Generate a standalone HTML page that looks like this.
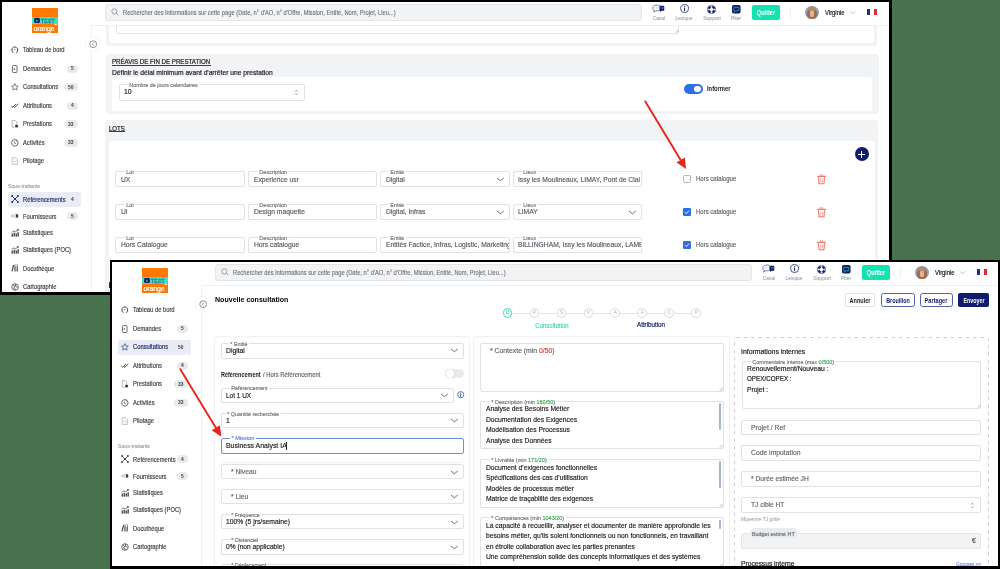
<!DOCTYPE html><html><head><meta charset="utf-8"><style>
html,body{margin:0;padding:0;}body{width:1000px;height:569px;overflow:hidden;position:relative;background:#48714e;font-family:"Liberation Sans",sans-serif;}
.b{position:absolute;}.t{position:absolute;white-space:nowrap;font-family:"Liberation Sans",sans-serif;}
.clip{position:absolute;overflow:hidden;background:#fff;will-change:transform;}.org{position:absolute;left:0;top:0;width:1200px;height:700px;}
</style></head><body>
<div class="b" style="left:0.00px;top:0.00px;width:892.00px;height:295.00px;background:#000"></div>
<div class="clip" style="left:2px;top:2px;width:887px;height:290px;"><div class="org" style="left:-2px;top:-2px;">
<div class="b" style="left:105.70px;top:0.00px;width:771.10px;height:46.40px;background:#f1f3f4;border-radius:3px"></div>
<div class="b" style="left:108.70px;top:0.00px;width:765.10px;height:43.30px;background:#fff;border-radius:2px"></div>
<div class="b" style="left:115.60px;top:10.00px;width:563.40px;height:23.90px;border:0.7px solid #e3e5e8;border-radius:2px;box-sizing:border-box;background:#fff"></div>
<svg class="b" style="left:674.60px;top:29.40px;" width="4" height="4" viewBox="0 0 4 4"><path d="M0.6 3.6 L3.6 0.6 M2.1 3.6 L3.6 2.1" stroke="#8a8f95" stroke-width="0.5"/></svg>
<div class="b" style="left:105.50px;top:54.30px;width:773.00px;height:59.30px;background:#f1f3f4;border-radius:3px"></div>
<div class="t" style="left:112.10px;top:58.04px;font-size:6.395px;line-height:8.31px;color:#202124;font-weight:400;-webkit-text-stroke:0.2px #202124;transform:scaleX(0.9615);transform-origin:0 50%;">PRÉAVIS DE FIN DE PRESTATION</div>
<div class="b" style="left:112.10px;top:65.00px;width:98.50px;height:0.60px;background:#3c4043"></div>
<div class="t" style="left:112.20px;top:67.53px;font-size:7.654px;line-height:9.95px;color:#202124;font-weight:400;-webkit-text-stroke:0.2px #202124;transform:scaleX(0.8772);transform-origin:0 50%;">Définir le délai minimum avant d'arrêter une prestation</div>
<div class="b" style="left:112.10px;top:77.40px;width:760.30px;height:33.20px;background:#fff;border-radius:2px"></div>
<div class="b" style="left:118.50px;top:84.00px;width:186.60px;height:16.90px;background:#fff;border:0.7px solid #e0e2e5;border-radius:2px;box-sizing:border-box;"></div>
<div class="t" style="left:129.70px;top:80.70px;font-size:6.156px;line-height:8.00px;color:#6f7378;font-weight:400;-webkit-text-stroke:0.16px #6f7378;transform:scaleX(0.8717);transform-origin:0 50%;background:#fff;padding:0 1.5px;margin-left:-1.5px;">Nombre de jours calendaires</div>
<div class="t" style="left:124.20px;top:87.47px;font-size:7.892px;line-height:10.26px;color:#202124;font-weight:400;-webkit-text-stroke:0.2px #202124;transform:scaleX(0.8772);transform-origin:0 50%;">10</div>
<svg class="b" style="left:293.50px;top:88.80px;" width="5" height="7" viewBox="0 0 5 7"><polyline points="1,2.6 2.4,1.2 3.8,2.6" fill="none" stroke="#5f6368" stroke-width="0.6"/><polyline points="1,4.4 2.4,5.8 3.8,4.4" fill="none" stroke="#5f6368" stroke-width="0.6"/></svg>
<div class="b" style="left:683.80px;top:84.00px;width:19.00px;height:10.20px;background:#2f6fe4;border-radius:5.2px"></div>
<div class="b" style="left:693.20px;top:84.70px;width:8.90px;height:8.80px;background:#fff;border-radius:50%;border:0.6px solid #2f6fe4;box-sizing:border-box"></div>
<div class="t" style="left:706.50px;top:85.31px;font-size:6.605px;line-height:8.59px;color:#202124;font-weight:700;transform:scaleX(0.8772);transform-origin:0 50%;">Informer</div>
<div class="b" style="left:105.30px;top:120.00px;width:773.20px;height:200.00px;background:#f1f3f4;border-radius:3px"></div>
<div class="t" style="left:108.80px;top:124.51px;font-size:6.291px;line-height:8.18px;color:#202124;font-weight:400;-webkit-text-stroke:0.2px #202124;transform:scaleX(0.9615);transform-origin:0 50%;">LOTS</div>
<div class="b" style="left:108.80px;top:131.30px;width:15.80px;height:0.60px;background:#3c4043"></div>
<div class="b" style="left:108.80px;top:140.50px;width:766.30px;height:179.50px;background:#fff;border-radius:2px"></div>
<div class="b" style="left:854.50px;top:147.30px;width:14.00px;height:14.00px;background:#0f1d6b;border-radius:50%"></div>
<div class="b" style="left:858.00px;top:153.60px;width:7.00px;height:1.40px;background:#fff"></div>
<div class="b" style="left:860.80px;top:150.80px;width:1.40px;height:7.00px;background:#fff"></div>
<div class="b" style="left:115.30px;top:171.30px;width:130.00px;height:16.10px;background:#fff;border:0.7px solid #e0e2e5;border-radius:2px;box-sizing:border-box;"></div>
<div class="t" style="left:126.40px;top:168.00px;font-size:6.156px;line-height:8.00px;color:#6f7378;font-weight:400;-webkit-text-stroke:0.16px #6f7378;transform:scaleX(0.8764);transform-origin:0 50%;background:#fff;padding:0 1.5px;margin-left:-1.5px;">Lot</div>
<div class="b" style="left:115.50px;top:171.50px;width:128.30px;height:15.30px;overflow:hidden">
<div class="t" style="left:5.80px;top:3.25px;font-size:7.695px;line-height:10.00px;color:#55595e;font-weight:400;-webkit-text-stroke:0.16px #55595e;transform:scaleX(0.8772);transform-origin:0 50%;">UX</div>
</div>
<div class="b" style="left:248.30px;top:171.30px;width:128.80px;height:16.10px;background:#fff;border:0.7px solid #e0e2e5;border-radius:2px;box-sizing:border-box;"></div>
<div class="t" style="left:259.00px;top:168.00px;font-size:6.156px;line-height:8.00px;color:#6f7378;font-weight:400;-webkit-text-stroke:0.16px #6f7378;transform:scaleX(0.9028);transform-origin:0 50%;background:#fff;padding:0 1.5px;margin-left:-1.5px;">Description</div>
<div class="b" style="left:248.50px;top:171.50px;width:127.10px;height:15.30px;overflow:hidden">
<div class="t" style="left:5.20px;top:3.25px;font-size:7.695px;line-height:10.00px;color:#55595e;font-weight:400;-webkit-text-stroke:0.16px #55595e;transform:scaleX(0.8772);transform-origin:0 50%;">Experience usr</div>
</div>
<div class="b" style="left:380.30px;top:171.30px;width:129.70px;height:16.10px;background:#fff;border:0.7px solid #e0e2e5;border-radius:2px;box-sizing:border-box;"></div>
<div class="t" style="left:390.40px;top:168.00px;font-size:6.156px;line-height:8.00px;color:#6f7378;font-weight:400;-webkit-text-stroke:0.16px #6f7378;transform:scaleX(0.8772);transform-origin:0 50%;background:#fff;padding:0 1.5px;margin-left:-1.5px;">Entité</div>
<div class="b" style="left:380.50px;top:171.50px;width:128.10px;height:15.30px;overflow:hidden">
<div class="t" style="left:5.10px;top:3.25px;font-size:7.695px;line-height:10.00px;color:#55595e;font-weight:400;-webkit-text-stroke:0.16px #55595e;transform:scaleX(0.8772);transform-origin:0 50%;">Digital</div>
</div>
<svg class="b" style="left:495.60px;top:175.05px;" width="8.8" height="8.8" viewBox="0 0 8.8 8.8"><polyline points="1,3.04 4.40,5.76 7.80,3.04" fill="none" stroke="#3c4043" stroke-width="0.75"/></svg>
<div class="b" style="left:513.20px;top:171.30px;width:128.80px;height:16.10px;background:#fff;border:0.7px solid #e0e2e5;border-radius:2px;box-sizing:border-box;"></div>
<div class="t" style="left:523.00px;top:168.00px;font-size:6.156px;line-height:8.00px;color:#6f7378;font-weight:400;-webkit-text-stroke:0.16px #6f7378;transform:scaleX(0.8772);transform-origin:0 50%;background:#fff;padding:0 1.5px;margin-left:-1.5px;">Lieux</div>
<div class="b" style="left:513.40px;top:171.50px;width:127.20px;height:15.30px;overflow:hidden">
<div class="t" style="left:4.50px;top:3.25px;font-size:7.695px;line-height:10.00px;color:#55595e;font-weight:400;-webkit-text-stroke:0.16px #55595e;transform:scaleX(0.8772);transform-origin:0 50%;">Issy les Moulineaux, LIMAY, Pont de Clai</div>
</div>
<div class="b" style="left:683.40px;top:175.15px;width:8.00px;height:8.00px;border:0.7px solid #b4b8bd;border-radius:1.4px;box-sizing:border-box;background:#fff"></div>
<div class="t" style="left:695.90px;top:175.11px;font-size:6.830px;line-height:8.88px;color:#5f6368;font-weight:400;-webkit-text-stroke:0.16px #5f6368;transform:scaleX(0.8772);transform-origin:0 50%;">Hors catalogue</div>
<svg class="b" style="left:816.80px;top:174.05px;" width="9" height="11" viewBox="0 0 9 11"><path d="M0.6 2.4 h7.8" stroke="#ee7b6e" stroke-width="1.3" stroke-linecap="round"/><path d="M3.2 1.6 v-0.8 h2.6 v0.8" fill="none" stroke="#ee7b6e" stroke-width="0.8"/><path d="M1.5 3.2 l0.5 6.6 h5 l0.5 -6.6" fill="none" stroke="#ee7b6e" stroke-width="1.1"/><path d="M3.6 4.6 v3.8 M5.4 4.6 v3.8" stroke="#ee7b6e" stroke-width="0.6"/></svg>
<div class="b" style="left:115.30px;top:203.80px;width:130.00px;height:16.00px;background:#fff;border:0.7px solid #e0e2e5;border-radius:2px;box-sizing:border-box;"></div>
<div class="t" style="left:126.40px;top:200.50px;font-size:6.156px;line-height:8.00px;color:#6f7378;font-weight:400;-webkit-text-stroke:0.16px #6f7378;transform:scaleX(0.8764);transform-origin:0 50%;background:#fff;padding:0 1.5px;margin-left:-1.5px;">Lot</div>
<div class="b" style="left:115.50px;top:204.00px;width:128.30px;height:15.20px;overflow:hidden">
<div class="t" style="left:5.80px;top:3.20px;font-size:7.695px;line-height:10.00px;color:#55595e;font-weight:400;-webkit-text-stroke:0.16px #55595e;transform:scaleX(0.8772);transform-origin:0 50%;">UI</div>
</div>
<div class="b" style="left:248.30px;top:203.80px;width:128.80px;height:16.00px;background:#fff;border:0.7px solid #e0e2e5;border-radius:2px;box-sizing:border-box;"></div>
<div class="t" style="left:259.00px;top:200.50px;font-size:6.156px;line-height:8.00px;color:#6f7378;font-weight:400;-webkit-text-stroke:0.16px #6f7378;transform:scaleX(0.9028);transform-origin:0 50%;background:#fff;padding:0 1.5px;margin-left:-1.5px;">Description</div>
<div class="b" style="left:248.50px;top:204.00px;width:127.10px;height:15.20px;overflow:hidden">
<div class="t" style="left:5.20px;top:3.20px;font-size:7.695px;line-height:10.00px;color:#55595e;font-weight:400;-webkit-text-stroke:0.16px #55595e;transform:scaleX(0.8772);transform-origin:0 50%;">Design maquette</div>
</div>
<div class="b" style="left:380.30px;top:203.80px;width:129.70px;height:16.00px;background:#fff;border:0.7px solid #e0e2e5;border-radius:2px;box-sizing:border-box;"></div>
<div class="t" style="left:390.40px;top:200.50px;font-size:6.156px;line-height:8.00px;color:#6f7378;font-weight:400;-webkit-text-stroke:0.16px #6f7378;transform:scaleX(0.8772);transform-origin:0 50%;background:#fff;padding:0 1.5px;margin-left:-1.5px;">Entité</div>
<div class="b" style="left:380.50px;top:204.00px;width:128.10px;height:15.20px;overflow:hidden">
<div class="t" style="left:5.10px;top:3.20px;font-size:7.695px;line-height:10.00px;color:#55595e;font-weight:400;-webkit-text-stroke:0.16px #55595e;transform:scaleX(0.8772);transform-origin:0 50%;">Digital, Infras</div>
</div>
<svg class="b" style="left:495.60px;top:207.50px;" width="8.8" height="8.8" viewBox="0 0 8.8 8.8"><polyline points="1,3.04 4.40,5.76 7.80,3.04" fill="none" stroke="#3c4043" stroke-width="0.75"/></svg>
<div class="b" style="left:513.20px;top:203.80px;width:128.80px;height:16.00px;background:#fff;border:0.7px solid #e0e2e5;border-radius:2px;box-sizing:border-box;"></div>
<div class="t" style="left:523.00px;top:200.50px;font-size:6.156px;line-height:8.00px;color:#6f7378;font-weight:400;-webkit-text-stroke:0.16px #6f7378;transform:scaleX(0.8772);transform-origin:0 50%;background:#fff;padding:0 1.5px;margin-left:-1.5px;">Lieux</div>
<div class="b" style="left:513.40px;top:204.00px;width:127.20px;height:15.20px;overflow:hidden">
<div class="t" style="left:4.50px;top:3.20px;font-size:7.695px;line-height:10.00px;color:#55595e;font-weight:400;-webkit-text-stroke:0.16px #55595e;transform:scaleX(0.8772);transform-origin:0 50%;">LIMAY</div>
</div>
<svg class="b" style="left:628.10px;top:207.50px;" width="8.8" height="8.8" viewBox="0 0 8.8 8.8"><polyline points="1,3.04 4.40,5.76 7.80,3.04" fill="none" stroke="#3c4043" stroke-width="0.75"/></svg>
<div class="b" style="left:683.40px;top:207.60px;width:8.00px;height:8.00px;background:#2f6fe4;border-radius:1.2px"></div>
<svg class="b" style="left:683.40px;top:207.60px;" width="8" height="8" viewBox="0 0 8 8"><polyline points="2,4.2 3.4,5.6 6,2.6" fill="none" stroke="#fff" stroke-width="0.9"/></svg>
<div class="t" style="left:695.90px;top:207.56px;font-size:6.830px;line-height:8.88px;color:#5f6368;font-weight:400;-webkit-text-stroke:0.16px #5f6368;transform:scaleX(0.8772);transform-origin:0 50%;">Hors catalogue</div>
<svg class="b" style="left:816.80px;top:206.50px;" width="9" height="11" viewBox="0 0 9 11"><path d="M0.6 2.4 h7.8" stroke="#ee7b6e" stroke-width="1.3" stroke-linecap="round"/><path d="M3.2 1.6 v-0.8 h2.6 v0.8" fill="none" stroke="#ee7b6e" stroke-width="0.8"/><path d="M1.5 3.2 l0.5 6.6 h5 l0.5 -6.6" fill="none" stroke="#ee7b6e" stroke-width="1.1"/><path d="M3.6 4.6 v3.8 M5.4 4.6 v3.8" stroke="#ee7b6e" stroke-width="0.6"/></svg>
<div class="b" style="left:115.30px;top:236.80px;width:130.00px;height:16.00px;background:#fff;border:0.7px solid #e0e2e5;border-radius:2px;box-sizing:border-box;"></div>
<div class="t" style="left:126.40px;top:233.50px;font-size:6.156px;line-height:8.00px;color:#6f7378;font-weight:400;-webkit-text-stroke:0.16px #6f7378;transform:scaleX(0.8764);transform-origin:0 50%;background:#fff;padding:0 1.5px;margin-left:-1.5px;">Lot</div>
<div class="b" style="left:115.50px;top:237.00px;width:128.30px;height:15.20px;overflow:hidden">
<div class="t" style="left:5.80px;top:3.20px;font-size:7.695px;line-height:10.00px;color:#55595e;font-weight:400;-webkit-text-stroke:0.16px #55595e;transform:scaleX(0.8772);transform-origin:0 50%;">Hors Catalogue</div>
</div>
<div class="b" style="left:248.30px;top:236.80px;width:128.80px;height:16.00px;background:#fff;border:0.7px solid #e0e2e5;border-radius:2px;box-sizing:border-box;"></div>
<div class="t" style="left:259.00px;top:233.50px;font-size:6.156px;line-height:8.00px;color:#6f7378;font-weight:400;-webkit-text-stroke:0.16px #6f7378;transform:scaleX(0.9028);transform-origin:0 50%;background:#fff;padding:0 1.5px;margin-left:-1.5px;">Description</div>
<div class="b" style="left:248.50px;top:237.00px;width:127.10px;height:15.20px;overflow:hidden">
<div class="t" style="left:5.20px;top:3.20px;font-size:7.695px;line-height:10.00px;color:#55595e;font-weight:400;-webkit-text-stroke:0.16px #55595e;transform:scaleX(0.8772);transform-origin:0 50%;">Hors catalogue</div>
</div>
<div class="b" style="left:380.30px;top:236.80px;width:129.70px;height:16.00px;background:#fff;border:0.7px solid #e0e2e5;border-radius:2px;box-sizing:border-box;"></div>
<div class="t" style="left:390.40px;top:233.50px;font-size:6.156px;line-height:8.00px;color:#6f7378;font-weight:400;-webkit-text-stroke:0.16px #6f7378;transform:scaleX(0.8772);transform-origin:0 50%;background:#fff;padding:0 1.5px;margin-left:-1.5px;">Entité</div>
<div class="b" style="left:380.50px;top:237.00px;width:128.10px;height:15.20px;overflow:hidden">
<div class="t" style="left:5.10px;top:3.20px;font-size:7.695px;line-height:10.00px;color:#55595e;font-weight:400;-webkit-text-stroke:0.16px #55595e;transform:scaleX(0.8772);transform-origin:0 50%;">Entités Factice, Infras, Logistic, Marketing</div>
</div>
<div class="b" style="left:513.20px;top:236.80px;width:128.80px;height:16.00px;background:#fff;border:0.7px solid #e0e2e5;border-radius:2px;box-sizing:border-box;"></div>
<div class="t" style="left:523.00px;top:233.50px;font-size:6.156px;line-height:8.00px;color:#6f7378;font-weight:400;-webkit-text-stroke:0.16px #6f7378;transform:scaleX(0.8772);transform-origin:0 50%;background:#fff;padding:0 1.5px;margin-left:-1.5px;">Lieux</div>
<div class="b" style="left:513.40px;top:237.00px;width:127.20px;height:15.20px;overflow:hidden">
<div class="t" style="left:4.50px;top:3.20px;font-size:7.695px;line-height:10.00px;color:#55595e;font-weight:400;-webkit-text-stroke:0.16px #55595e;transform:scaleX(0.8772);transform-origin:0 50%;">BILLINGHAM, Issy les Moulineaux, LAMBERSART</div>
</div>
<div class="b" style="left:683.40px;top:240.60px;width:8.00px;height:8.00px;background:#2f6fe4;border-radius:1.2px"></div>
<svg class="b" style="left:683.40px;top:240.60px;" width="8" height="8" viewBox="0 0 8 8"><polyline points="2,4.2 3.4,5.6 6,2.6" fill="none" stroke="#fff" stroke-width="0.9"/></svg>
<div class="t" style="left:695.90px;top:240.56px;font-size:6.830px;line-height:8.88px;color:#5f6368;font-weight:400;-webkit-text-stroke:0.16px #5f6368;transform:scaleX(0.8772);transform-origin:0 50%;">Hors catalogue</div>
<svg class="b" style="left:816.80px;top:239.50px;" width="9" height="11" viewBox="0 0 9 11"><path d="M0.6 2.4 h7.8" stroke="#ee7b6e" stroke-width="1.3" stroke-linecap="round"/><path d="M3.2 1.6 v-0.8 h2.6 v0.8" fill="none" stroke="#ee7b6e" stroke-width="0.8"/><path d="M1.5 3.2 l0.5 6.6 h5 l0.5 -6.6" fill="none" stroke="#ee7b6e" stroke-width="1.1"/><path d="M3.6 4.6 v3.8 M5.4 4.6 v3.8" stroke="#ee7b6e" stroke-width="0.6"/></svg>
<div class="b" style="left:108.50px;top:282.00px;width:2.00px;height:6.00px;background:#333"></div>
<div class="b" style="left:0.00px;top:0.00px;width:91.40px;height:700.00px;background:#fff"></div>
<div class="b" style="left:91.40px;top:0.00px;width:908.60px;height:25.30px;background:#fff"></div>
<div class="b" style="left:91.20px;top:25.30px;width:0.60px;height:674.70px;background:#eff1f3"></div>
<div class="b" style="left:91.40px;top:25.00px;width:908.60px;height:0.60px;background:#eef0f2"></div>
<div class="b" style="left:32.00px;top:8.00px;width:25.50px;height:25.00px;background:#ff7900"></div>
<div class="b" style="left:32.00px;top:16.50px;width:25.50px;height:7.80px;background:#3fe2c2"></div>
<div class="b" style="left:34.30px;top:17.50px;width:6.00px;height:5.80px;background:#0f1d6b;border-radius:1.4px"></div>
<svg class="b" style="left:34.30px;top:17.50px;" width="6" height="6" viewBox="0 0 6 6"><path d="M2.2 1.6 L4.2 2.9 L2.2 4.2 Z" fill="#3fb6e2"/></svg>
<div class="t" style="left:41.2px;top:17.6px;font-size:5.2px;line-height:6.5px;font-weight:700;color:#49d6c4;-webkit-text-stroke:0.3px #1b4f86;letter-spacing:0.35px;transform:scaleX(0.95);transform-origin:0 0">TEST</div>
<div class="t" style="left:33.40px;top:24.05px;font-size:7.000px;line-height:9.10px;color:#fff;font-weight:400;-webkit-text-stroke:0.2px #fff;letter-spacing:-0.1px;">orange</div>
<div class="t" style="left:54.40px;top:23.98px;font-size:2.500px;line-height:3.25px;color:#fff;font-weight:400;-webkit-text-stroke:0.16px #fff;">™</div>
<div class="b" style="left:105.20px;top:4.20px;width:537.10px;height:16.80px;background:#f1f3f4;border:0.6px solid #e4e7ea;border-radius:3px;box-sizing:border-box"></div>
<svg class="b" style="left:110.50px;top:8.30px;" width="8" height="8" viewBox="0 0 8 8"><circle cx="3.4" cy="3.4" r="2.6" fill="none" stroke="#7a7f85" stroke-width="0.7"/><line x1="5.3" y1="5.3" x2="7.3" y2="7.3" stroke="#7a7f85" stroke-width="0.7"/></svg>
<div class="t" style="left:122.80px;top:8.73px;font-size:6.573px;line-height:8.54px;color:#6b7075;font-weight:400;-webkit-text-stroke:0.16px #6b7075;transform:scaleX(0.8772);transform-origin:0 50%;-webkit-text-stroke:0.1px #6b7075;">Rechercher des informations sur cette page (Date, n° d'AO, n° d'Offre, Mission, Entité, Nom, Projet, Lieu...)</div>
<svg class="b" style="left:651.50px;top:3.50px;" width="13" height="9" viewBox="0 0 13 9"><path d="M5 1 C7.6 1 9 2.2 9 3.9 C9 5.6 7.6 6.8 5 6.8 L3.6 6.8 L1.6 8.2 L2.2 6.4 C1.2 5.9 0.8 5 0.8 3.9 C0.8 2.2 2.4 1 5 1z" fill="#fff" stroke="#0f1d6b" stroke-width="0.55"/><line x1="2.6" y1="3.9" x2="7.2" y2="3.9" stroke="#9aa0a6" stroke-width="0.5"/><path d="M8.4 1.8 h3 a0.9 0.9 0 0 1 0.9 0.9 v3.2 a0.9 0.9 0 0 1 -0.9 0.9 h-1.6 l-1.6 1.2 v-1.2 a0.9 0.9 0 0 1 -0.7 -0.9 v-3.2 a0.9 0.9 0 0 1 0.9 -0.9z" fill="#0f1d6b"/><line x1="9.2" y1="4.0" x2="11.6" y2="4.0" stroke="#fff" stroke-width="0.5"/></svg>
<div class="t" style="left:658.80px;top:14.82px;font-size:5.500px;line-height:7.15px;color:#a8adb2;font-weight:400;-webkit-text-stroke:0.16px #a8adb2;transform:translateX(-50%) scaleX(0.8559);transform-origin:50% 50%;">Canal</div>
<svg class="b" style="left:679.60px;top:4.40px;" width="10" height="10" viewBox="0 0 10 10"><circle cx="4.6" cy="4.6" r="4.0" fill="none" stroke="#0f1d6b" stroke-width="0.75"/><circle cx="4.6" cy="2.6" r="0.6" fill="#0f1d6b"/><rect x="4.1" y="3.8" width="1" height="3.3" fill="#0f1d6b"/></svg>
<div class="t" style="left:684.20px;top:14.82px;font-size:5.500px;line-height:7.15px;color:#a8adb2;font-weight:400;-webkit-text-stroke:0.16px #a8adb2;transform:translateX(-50%) scaleX(0.8772);transform-origin:50% 50%;">Lexique</div>
<svg class="b" style="left:707.40px;top:4.60px;" width="9" height="9" viewBox="0 0 9 9"><circle cx="4.5" cy="4.5" r="4.1" fill="#d6dbe8" stroke="#0f1d6b" stroke-width="0.45"/><circle cx="4.5" cy="4.5" r="1.6" fill="#fff"/><path d="M7.37 5.38 A3.0 3.0 0 0 1 5.38 7.37" fill="none" stroke="#0f1d6b" stroke-width="2.1"/><path d="M3.62 7.37 A3.0 3.0 0 0 1 1.63 5.38" fill="none" stroke="#0f1d6b" stroke-width="2.1"/><path d="M1.63 3.62 A3.0 3.0 0 0 1 3.62 1.63" fill="none" stroke="#0f1d6b" stroke-width="2.1"/><path d="M5.38 1.63 A3.0 3.0 0 0 1 7.37 3.62" fill="none" stroke="#0f1d6b" stroke-width="2.1"/></svg>
<div class="t" style="left:711.80px;top:14.82px;font-size:5.500px;line-height:7.15px;color:#a8adb2;font-weight:400;-webkit-text-stroke:0.16px #a8adb2;transform:translateX(-50%) scaleX(0.9136);transform-origin:50% 50%;">Support</div>
<svg class="b" style="left:731.70px;top:4.80px;" width="9" height="9" viewBox="0 0 9 9"><rect x="0" y="0" width="8.6" height="8.6" rx="1.8" fill="#0f1d6b"/><path d="M2.4 2.3 h3.8 a0.6 0.6 0 0 1 0.6 0.6 v2.3 a0.6 0.6 0 0 1 -0.6 0.6 h-2.4 l-1.6 1.3 v-1.3 a0.6 0.6 0 0 1 -0.4 -0.6 v-2.3 a0.6 0.6 0 0 1 0.6 -0.6z" fill="none" stroke="#3fe2c2" stroke-width="0.6"/></svg>
<div class="t" style="left:736.10px;top:14.82px;font-size:5.500px;line-height:7.15px;color:#a8adb2;font-weight:400;-webkit-text-stroke:0.16px #a8adb2;transform:translateX(-50%) scaleX(0.9019);transform-origin:50% 50%;">Piter</div>
<div class="b" style="left:751.50px;top:5.10px;width:28.30px;height:14.80px;background:#14e2b0;border-radius:2px"></div>
<div class="t" style="left:765.50px;top:9.04px;font-size:6.399px;line-height:8.32px;color:#fff;font-weight:700;transform:translateX(-50%) scaleX(0.8772);transform-origin:50% 50%;">Quitter</div>
<div class="b" style="left:790.30px;top:7.00px;width:0.60px;height:11.00px;background:#eef0f2"></div>
<div class="b" style="left:805.3px;top:5.5px;width:13.4px;height:13.4px;border-radius:50%;overflow:hidden;background:#8a9cc0;"><div style="position:absolute;left:1.6px;top:2.2px;width:10.2px;height:13px;border-radius:48%;background:#9c6f4c"></div><div style="position:absolute;left:4.3px;top:4.6px;width:4.8px;height:6.8px;border-radius:50%;background:#e6b39a"></div><div style="position:absolute;left:3px;top:1.8px;width:7.5px;height:3.6px;border-radius:50%;background:#b58a62"></div></div>
<div class="t" style="left:825.40px;top:8.62px;font-size:6.736px;line-height:8.76px;color:#202124;font-weight:400;-webkit-text-stroke:0.2px #202124;transform:scaleX(0.8772);transform-origin:0 50%;">Virginie</div>
<svg class="b" style="left:848.90px;top:8.80px;" width="7.2" height="7.2" viewBox="0 0 7.2 7.2"><polyline points="1,2.56 3.60,4.64 6.20,2.56" fill="none" stroke="#9aa0a6" stroke-width="0.6"/></svg>
<div class="b" style="left:867.00px;top:9.40px;width:3.40px;height:5.80px;background:#1e2f86"></div>
<div class="b" style="left:873.80px;top:9.40px;width:3.40px;height:5.80px;background:#e8282e"></div>
<div class="b" style="left:85.8px;top:36.8px;width:14.4px;height:14.4px;border-radius:50%;background:#fff;box-shadow:0 0 2px rgba(0,0,0,0.12)"></div>
<svg class="b" style="left:88.80px;top:39.80px;" width="9" height="9" viewBox="0 0 9 9"><circle cx="4.2" cy="4.2" r="3.4" fill="none" stroke="#5f6368" stroke-width="0.7"/><polyline points="4.9,2.6 3.3,4.2 4.9,5.8" fill="none" stroke="#5f6368" stroke-width="0.7"/></svg>
<div class="t" style="left:7.90px;top:183.15px;font-size:5.928px;line-height:7.71px;color:#9aa0a6;font-weight:400;-webkit-text-stroke:0.16px #9aa0a6;transform:scaleX(0.8772);transform-origin:0 50%;">Sous-traitants</div>
<div class="t" style="left:22.80px;top:46.40px;font-size:6.612px;line-height:8.60px;color:#383b40;font-weight:400;-webkit-text-stroke:0.16px #383b40;transform:scaleX(0.8772);transform-origin:0 50%;">Tableau de bord</div>
<svg class="b" style="left:10.60px;top:46.20px;" width="8" height="8" viewBox="0 0 8 8"><path stroke-linecap="round" d="M2.02 6.54 A3.1 3.1 0 0 1 1.73 1.70 M2.84 1.05 A3.1 3.1 0 0 1 4.76 1.05 M5.87 1.70 A3.1 3.1 0 0 1 5.58 6.54" fill="none" stroke="#383b40" stroke-width="1.0"/><circle cx="3.8" cy="3.5" r="0.65" fill="#e8503a"/></svg>
<div class="t" style="left:22.80px;top:64.80px;font-size:6.612px;line-height:8.60px;color:#383b40;font-weight:400;-webkit-text-stroke:0.16px #383b40;transform:scaleX(0.8772);transform-origin:0 50%;">Demandes</div>
<svg class="b" style="left:10.60px;top:64.60px;" width="8" height="8" viewBox="0 0 8 8"><rect x="1.4" y="0.5" width="4.6" height="7" rx="1" fill="none" stroke="#383b40" stroke-width="0.75"/><circle cx="3.3" cy="3.9" r="0.75" fill="#383b40"/></svg>
<div class="b" style="left:67.00px;top:64.60px;width:10.60px;height:8.00px;background:#e8eaed;border-radius:4px"></div>
<div class="t" style="left:72.30px;top:66.11px;font-size:4.900px;line-height:6.37px;color:#3c4043;font-weight:700;transform:translateX(-50%) scaleX(1.0000);transform-origin:50% 50%;">5</div>
<div class="t" style="left:22.80px;top:83.30px;font-size:6.612px;line-height:8.60px;color:#383b40;font-weight:400;-webkit-text-stroke:0.16px #383b40;transform:scaleX(0.8772);transform-origin:0 50%;">Consultations</div>
<svg class="b" style="left:10.60px;top:83.10px;" width="8" height="8" viewBox="0 0 8 8"><path d="M3.9 0.6 L4.9 2.9 L7.3 3.1 L5.5 4.7 L6.0 7.1 L3.9 5.8 L1.8 7.1 L2.3 4.7 L0.5 3.1 L2.9 2.9 Z" fill="none" stroke="#383b40" stroke-width="0.6" stroke-linejoin="round"/></svg>
<div class="b" style="left:64.00px;top:83.10px;width:13.60px;height:8.00px;background:#e8eaed;border-radius:4px"></div>
<div class="t" style="left:70.80px;top:84.61px;font-size:4.900px;line-height:6.37px;color:#3c4043;font-weight:700;transform:translateX(-50%) scaleX(1.0000);transform-origin:50% 50%;">50</div>
<div class="t" style="left:22.80px;top:101.70px;font-size:6.612px;line-height:8.60px;color:#383b40;font-weight:400;-webkit-text-stroke:0.16px #383b40;transform:scaleX(0.8772);transform-origin:0 50%;">Attributions</div>
<svg class="b" style="left:10.60px;top:101.50px;" width="8" height="8" viewBox="0 0 8 8"><path d="M0.6 4.2 L1.9 5.3 L4.6 2.3 M3.0 4.8 L3.9 5.4 L7.0 2.0" fill="none" stroke="#383b40" stroke-width="0.9" stroke-linecap="round"/></svg>
<div class="b" style="left:67.00px;top:101.50px;width:10.60px;height:8.00px;background:#e8eaed;border-radius:4px"></div>
<div class="t" style="left:72.30px;top:103.02px;font-size:4.900px;line-height:6.37px;color:#3c4043;font-weight:700;transform:translateX(-50%) scaleX(1.0000);transform-origin:50% 50%;">4</div>
<div class="t" style="left:22.80px;top:120.20px;font-size:6.612px;line-height:8.60px;color:#383b40;font-weight:400;-webkit-text-stroke:0.16px #383b40;transform:scaleX(0.8772);transform-origin:0 50%;">Prestations</div>
<svg class="b" style="left:10.60px;top:120.00px;" width="8" height="8" viewBox="0 0 8 8"><path d="M1.2 0.6 h3.2 l1.3 1.3 v2.0 M1.2 0.6 v6.6 h2.6" fill="none" stroke="#8a8f95" stroke-width="0.6"/><circle cx="5.6" cy="6.0" r="1.6" fill="#383b40"/></svg>
<div class="b" style="left:64.00px;top:120.00px;width:13.60px;height:8.00px;background:#e8eaed;border-radius:4px"></div>
<div class="t" style="left:70.80px;top:121.52px;font-size:4.900px;line-height:6.37px;color:#3c4043;font-weight:700;transform:translateX(-50%) scaleX(1.0000);transform-origin:50% 50%;">33</div>
<div class="t" style="left:22.80px;top:138.70px;font-size:6.612px;line-height:8.60px;color:#383b40;font-weight:400;-webkit-text-stroke:0.16px #383b40;transform:scaleX(0.8772);transform-origin:0 50%;">Activités</div>
<svg class="b" style="left:10.60px;top:138.50px;" width="8" height="8" viewBox="0 0 8 8"><path d="M6.4 2.0 A3.2 3.2 0 1 1 5.2 1.0" fill="none" stroke="#383b40" stroke-width="0.8"/><path d="M5.0 0.2 L6.6 1.2 L5.4 2.4z" fill="#383b40"/><polyline points="3.4,2.2 3.4,4.2 5.0,4.6" fill="none" stroke="#383b40" stroke-width="0.6"/></svg>
<div class="b" style="left:64.00px;top:138.50px;width:13.60px;height:8.00px;background:#e8eaed;border-radius:4px"></div>
<div class="t" style="left:70.80px;top:140.01px;font-size:4.900px;line-height:6.37px;color:#3c4043;font-weight:700;transform:translateX(-50%) scaleX(1.0000);transform-origin:50% 50%;">33</div>
<div class="t" style="left:22.80px;top:157.20px;font-size:6.612px;line-height:8.60px;color:#383b40;font-weight:400;-webkit-text-stroke:0.16px #383b40;transform:scaleX(0.8772);transform-origin:0 50%;">Pilotage</div>
<svg class="b" style="left:10.60px;top:157.00px;" width="8" height="8" viewBox="0 0 8 8"><path d="M1.2 0.6 h3.4 l1.9 1.9 v5.0 h-5.3 z" fill="#f4f5f6" stroke="#a9adb2" stroke-width="0.6"/><polyline points="2.4,5.4 3.4,4.2 4.2,5.0 5.2,3.8" fill="none" stroke="#a9adb2" stroke-width="0.5"/></svg>
<div class="b" style="left:7.90px;top:191.80px;width:73.30px;height:15.00px;background:#e9ecf4;border-radius:2.5px"></div>
<div class="t" style="left:22.80px;top:195.50px;font-size:6.612px;line-height:8.60px;color:#1a2a6c;font-weight:400;-webkit-text-stroke:0.16px #1a2a6c;transform:scaleX(0.8772);transform-origin:0 50%;">Référencements</div>
<svg class="b" style="left:10.60px;top:195.30px;" width="8" height="8" viewBox="0 0 8 8"><path d="M1.3 1.3 L6.7 6.7 M6.7 1.3 L1.3 6.7" stroke="#1a2a6c" stroke-width="0.85"/><circle cx="1.1" cy="1.1" r="1.0" fill="#1a2a6c"/><circle cx="6.9" cy="1.1" r="1.0" fill="#1a2a6c"/><circle cx="1.1" cy="6.9" r="1.0" fill="#1a2a6c"/><circle cx="6.9" cy="6.9" r="1.0" fill="#1a2a6c"/><circle cx="4" cy="4" r="1.1" fill="#1a2a6c"/></svg>
<div class="b" style="left:67.00px;top:195.30px;width:10.60px;height:8.00px;background:transparent;border-radius:4px"></div>
<div class="t" style="left:72.30px;top:196.81px;font-size:4.900px;line-height:6.37px;color:#3c4043;font-weight:700;transform:translateX(-50%) scaleX(1.0000);transform-origin:50% 50%;">4</div>
<div class="t" style="left:22.80px;top:212.60px;font-size:6.612px;line-height:8.60px;color:#383b40;font-weight:400;-webkit-text-stroke:0.16px #383b40;transform:scaleX(0.8772);transform-origin:0 50%;">Fournisseurs</div>
<svg class="b" style="left:10.60px;top:212.40px;" width="8" height="8" viewBox="0 0 8 8"><path d="M0.6 3.0 h2.2 l2.6 -1.4 v4.6 l-2.6 -1.4 h-2.2z" fill="#e4e6e9" stroke="#9aa0a6" stroke-width="0.45"/><rect x="5.0" y="2.2" width="2.2" height="3.4" rx="0.6" fill="#383b40"/></svg>
<div class="b" style="left:67.00px;top:212.40px;width:10.60px;height:8.00px;background:#e8eaed;border-radius:4px"></div>
<div class="t" style="left:72.30px;top:213.91px;font-size:4.900px;line-height:6.37px;color:#3c4043;font-weight:700;transform:translateX(-50%) scaleX(1.0000);transform-origin:50% 50%;">5</div>
<div class="t" style="left:22.80px;top:229.40px;font-size:6.612px;line-height:8.60px;color:#383b40;font-weight:400;-webkit-text-stroke:0.16px #383b40;transform:scaleX(0.8772);transform-origin:0 50%;">Statistiques</div>
<svg class="b" style="left:10.60px;top:229.20px;" width="8" height="8" viewBox="0 0 8 8"><rect x="0.6" y="4.6" width="1.3" height="3" fill="#383b40"/><rect x="2.6" y="3.8" width="1.3" height="3.8" fill="#383b40"/><rect x="4.6" y="4.4" width="1.3" height="3.2" fill="#383b40"/><rect x="6.5" y="3.2" width="1.3" height="4.4" fill="#383b40"/><polyline points="0.6,3.4 2.8,2.0 4.6,2.8 7.0,0.9" fill="none" stroke="#383b40" stroke-width="0.7"/><circle cx="7.0" cy="0.9" r="0.8" fill="#383b40"/></svg>
<div class="t" style="left:22.80px;top:246.20px;font-size:6.612px;line-height:8.60px;color:#383b40;font-weight:400;-webkit-text-stroke:0.16px #383b40;transform:scaleX(0.8772);transform-origin:0 50%;">Statistiques (POC)</div>
<svg class="b" style="left:10.60px;top:246.00px;" width="8" height="8" viewBox="0 0 8 8"><rect x="0.6" y="4.6" width="1.3" height="3" fill="#383b40"/><rect x="2.6" y="3.8" width="1.3" height="3.8" fill="#383b40"/><rect x="4.6" y="4.4" width="1.3" height="3.2" fill="#383b40"/><rect x="6.5" y="3.2" width="1.3" height="4.4" fill="#383b40"/><polyline points="0.6,3.4 2.8,2.0 4.6,2.8 7.0,0.9" fill="none" stroke="#383b40" stroke-width="0.7"/><circle cx="7.0" cy="0.9" r="0.8" fill="#383b40"/></svg>
<div class="t" style="left:22.80px;top:264.50px;font-size:6.612px;line-height:8.60px;color:#383b40;font-weight:400;-webkit-text-stroke:0.16px #383b40;transform:scaleX(0.8772);transform-origin:0 50%;">Docuthèque</div>
<svg class="b" style="left:10.60px;top:264.30px;" width="8" height="8" viewBox="0 0 8 8"><path d="M1.0 7.4 L2.6 1.0 M4.0 7.4 V2.2 M6.2 7.4 V2.2" stroke="#383b40" stroke-width="1.1"/><rect x="3.4" y="0.6" width="1.2" height="0.9" fill="#383b40"/><rect x="5.6" y="0.6" width="1.2" height="0.9" fill="#383b40"/></svg>
<div class="t" style="left:22.80px;top:283.00px;font-size:6.612px;line-height:8.60px;color:#383b40;font-weight:400;-webkit-text-stroke:0.16px #383b40;transform:scaleX(0.8772);transform-origin:0 50%;">Cartographie</div>
<svg class="b" style="left:10.60px;top:282.80px;" width="8" height="8" viewBox="0 0 8 8"><circle cx="4" cy="4" r="3.3" fill="none" stroke="#383b40" stroke-width="0.75"/><path d="M2.0 2.0 L3.6 3.2 L2.6 5.6 M4.8 1.0 L4.4 3.2 L6.6 4.4 M3.4 5.0 L4.6 7.0" fill="none" stroke="#383b40" stroke-width="0.8"/></svg>
</div></div>
<div class="b" style="left:110.00px;top:260.00px;width:890.00px;height:309.00px;background:#000"></div>
<div class="clip" style="left:112px;top:262px;width:886px;height:304px;"><div class="org" style="left:-2px;top:-2px;">
<div class="t" style="left:104.60px;top:34.96px;font-size:8.064px;line-height:10.48px;color:#000;font-weight:700;transform:scaleX(0.8772);transform-origin:0 50%;">Nouvelle consultation</div>
<div class="b" style="left:397.60px;top:52.50px;width:188.60px;height:0.60px;background:#e3e5e8"></div>
<div class="b" style="left:392.70px;top:47.90px;width:9.80px;height:9.80px;background:#fff;border:0.9px solid #3fd9b4;border-radius:50%;box-sizing:border-box"></div>
<div class="t" style="left:397.60px;top:50.41px;font-size:4.600px;line-height:5.98px;color:#3fd9b4;font-weight:400;-webkit-text-stroke:0.16px #3fd9b4;transform:translateX(-50%) scaleX(1.0000);transform-origin:50% 50%;">D</div>
<div class="b" style="left:419.64px;top:47.90px;width:9.80px;height:9.80px;background:#fff;border:0.7px solid #dadce0;border-radius:50%;box-sizing:border-box"></div>
<div class="t" style="left:424.54px;top:50.41px;font-size:4.600px;line-height:5.98px;color:#c4c7cc;font-weight:400;-webkit-text-stroke:0.16px #c4c7cc;transform:translateX(-50%) scaleX(1.0000);transform-origin:50% 50%;">P</div>
<div class="b" style="left:446.58px;top:47.90px;width:9.80px;height:9.80px;background:#fff;border:0.7px solid #dadce0;border-radius:50%;box-sizing:border-box"></div>
<div class="t" style="left:451.48px;top:50.41px;font-size:4.600px;line-height:5.98px;color:#c4c7cc;font-weight:400;-webkit-text-stroke:0.16px #c4c7cc;transform:translateX(-50%) scaleX(1.0000);transform-origin:50% 50%;">S</div>
<div class="b" style="left:473.52px;top:47.90px;width:9.80px;height:9.80px;background:#fff;border:0.7px solid #dadce0;border-radius:50%;box-sizing:border-box"></div>
<div class="t" style="left:478.42px;top:50.41px;font-size:4.600px;line-height:5.98px;color:#c4c7cc;font-weight:400;-webkit-text-stroke:0.16px #c4c7cc;transform:translateX(-50%) scaleX(1.0000);transform-origin:50% 50%;">V</div>
<div class="b" style="left:500.46px;top:47.90px;width:9.80px;height:9.80px;background:#fff;border:0.7px solid #dadce0;border-radius:50%;box-sizing:border-box"></div>
<div class="t" style="left:505.36px;top:50.41px;font-size:4.600px;line-height:5.98px;color:#c4c7cc;font-weight:400;-webkit-text-stroke:0.16px #c4c7cc;transform:translateX(-50%) scaleX(1.0000);transform-origin:50% 50%;">A</div>
<div class="b" style="left:527.40px;top:47.90px;width:9.80px;height:9.80px;background:#fff;border:0.7px solid #dadce0;border-radius:50%;box-sizing:border-box"></div>
<div class="t" style="left:532.30px;top:50.41px;font-size:4.600px;line-height:5.98px;color:#c4c7cc;font-weight:400;-webkit-text-stroke:0.16px #c4c7cc;transform:translateX(-50%) scaleX(1.0000);transform-origin:50% 50%;">F</div>
<div class="b" style="left:554.34px;top:47.90px;width:9.80px;height:9.80px;background:#fff;border:0.7px solid #dadce0;border-radius:50%;box-sizing:border-box"></div>
<div class="t" style="left:559.24px;top:50.41px;font-size:4.600px;line-height:5.98px;color:#c4c7cc;font-weight:400;-webkit-text-stroke:0.16px #c4c7cc;transform:translateX(-50%) scaleX(1.0000);transform-origin:50% 50%;">C</div>
<div class="b" style="left:581.28px;top:47.90px;width:9.80px;height:9.80px;background:#fff;border:0.7px solid #dadce0;border-radius:50%;box-sizing:border-box"></div>
<div class="t" style="left:586.18px;top:50.41px;font-size:4.600px;line-height:5.98px;color:#c4c7cc;font-weight:400;-webkit-text-stroke:0.16px #c4c7cc;transform:translateX(-50%) scaleX(1.0000);transform-origin:50% 50%;">P</div>
<div class="t" style="left:441.70px;top:61.55px;font-size:6.849px;line-height:8.90px;color:#3fd9b4;font-weight:400;-webkit-text-stroke:0.16px #3fd9b4;transform:translateX(-50%) scaleX(0.8772);transform-origin:50% 50%;">Consultation</div>
<div class="t" style="left:541.40px;top:61.39px;font-size:7.089px;line-height:9.22px;color:#0f1d6b;font-weight:400;-webkit-text-stroke:0.2px #0f1d6b;transform:translateX(-50%) scaleX(0.8772);transform-origin:50% 50%;">Attribution</div>
<div class="b" style="left:734.80px;top:32.70px;width:30.70px;height:14.70px;border:0.6px solid #e3e5e8;border-radius:2px;box-sizing:border-box;background:#fff"></div>
<div class="t" style="left:750.20px;top:36.84px;font-size:6.400px;line-height:8.32px;color:#202124;font-weight:700;transform:translateX(-50%) scaleX(0.8603);transform-origin:50% 50%;">Annuler</div>
<div class="b" style="left:771.10px;top:32.70px;width:33.60px;height:14.70px;border:0.7px solid #5563a0;border-radius:2.5px;box-sizing:border-box;background:#fff"></div>
<div class="t" style="left:787.90px;top:36.84px;font-size:6.400px;line-height:8.32px;color:#0f1d6b;font-weight:700;transform:translateX(-50%) scaleX(0.8439);transform-origin:50% 50%;">Brouillon</div>
<div class="b" style="left:809.50px;top:32.70px;width:33.30px;height:14.70px;border:0.7px solid #5563a0;border-radius:2.5px;box-sizing:border-box;background:#fff"></div>
<div class="t" style="left:826.15px;top:36.84px;font-size:6.400px;line-height:8.32px;color:#0f1d6b;font-weight:700;transform:translateX(-50%) scaleX(0.8818);transform-origin:50% 50%;">Partager</div>
<div class="b" style="left:847.90px;top:32.70px;width:31.20px;height:14.70px;background:#0f1d6b;border-radius:2px"></div>
<div class="t" style="left:863.50px;top:36.84px;font-size:6.400px;line-height:8.32px;color:#fff;font-weight:700;transform:translateX(-50%) scaleX(0.8354);transform-origin:50% 50%;">Envoyer</div>
<div class="b" style="left:103.60px;top:75.80px;width:256.20px;height:284.20px;border:0.7px solid #f0f1f3;border-radius:3px;box-sizing:border-box"></div>
<div class="b" style="left:363.30px;top:75.80px;width:256.60px;height:284.20px;border:0.7px solid #f0f1f3;border-radius:3px;box-sizing:border-box"></div>
<svg class="b" style="left:623.60px;top:76.80px;" width="255" height="260" viewBox="0 0 255 260"><rect x="0.5" y="0.5" width="254" height="259" rx="1.2" fill="none" stroke="#c9cbcf" stroke-width="0.9" stroke-dasharray="3.5 3.9" stroke-dashoffset="-0.6"/></svg>
<div class="b" style="left:111.20px;top:82.90px;width:242.80px;height:15.70px;background:#fff;border:0.7px solid #e0e2e5;border-radius:2px;box-sizing:border-box;"></div>
<div class="t" style="left:120.70px;top:79.60px;font-size:6.156px;line-height:8.00px;color:#6f7378;font-weight:400;-webkit-text-stroke:0.16px #6f7378;transform:scaleX(0.8716);transform-origin:0 50%;background:#fff;padding:0 1.5px;margin-left:-1.5px;">* Entité</div>
<div class="b" style="left:111.40px;top:83.10px;width:241.10px;height:14.90px;overflow:hidden">
<div class="t" style="left:4.70px;top:3.05px;font-size:7.695px;line-height:10.00px;color:#161718;font-weight:400;-webkit-text-stroke:0.16px #161718;transform:scaleX(0.8839);transform-origin:0 50%;">Digital</div>
</div>
<svg class="b" style="left:340.20px;top:86.45px;" width="8.8" height="8.8" viewBox="0 0 8.8 8.8"><polyline points="1,3.04 4.40,5.76 7.80,3.04" fill="none" stroke="#3c4043" stroke-width="0.75"/></svg>
<div class="t" style="left:111.40px;top:110.78px;font-size:6.500px;line-height:8.45px;color:#202124;font-weight:700;transform:scaleX(0.8432);transform-origin:0 50%;">Référencement</div>
<div class="t" style="left:153.40px;top:110.78px;font-size:6.500px;line-height:8.45px;color:#5f6368;font-weight:400;-webkit-text-stroke:0.16px #5f6368;transform:scaleX(0.9028);transform-origin:0 50%;">/ Hors Référencement</div>
<div class="b" style="left:335.00px;top:108.80px;width:18.50px;height:9.40px;background:#e8eaed;border-radius:5px"></div>
<div class="b" style="left:335.60px;top:109.40px;width:8.20px;height:8.20px;background:#fff;border-radius:50%;box-shadow:0 0 1px rgba(0,0,0,0.3)"></div>
<div class="b" style="left:111.20px;top:127.50px;width:233.30px;height:15.40px;background:#fff;border:0.7px solid #e0e2e5;border-radius:2px;box-sizing:border-box;"></div>
<div class="t" style="left:121.00px;top:124.20px;font-size:6.156px;line-height:8.00px;color:#6f7378;font-weight:400;-webkit-text-stroke:0.16px #6f7378;transform:scaleX(0.8625);transform-origin:0 50%;background:#fff;padding:0 1.5px;margin-left:-1.5px;">Référencement</div>
<div class="b" style="left:111.40px;top:127.70px;width:231.60px;height:14.60px;overflow:hidden">
<div class="t" style="left:4.80px;top:2.90px;font-size:7.695px;line-height:10.00px;color:#161718;font-weight:400;-webkit-text-stroke:0.16px #161718;transform:scaleX(0.8416);transform-origin:0 50%;">Lot 1 UX</div>
</div>
<svg class="b" style="left:330.20px;top:130.90px;" width="8.8" height="8.8" viewBox="0 0 8.8 8.8"><polyline points="1,3.04 4.40,5.76 7.80,3.04" fill="none" stroke="#3c4043" stroke-width="0.75"/></svg>
<svg class="b" style="left:347.20px;top:130.90px;" width="8" height="8" viewBox="0 0 8 8"><circle cx="3.7" cy="3.7" r="3.1" fill="none" stroke="#3656b8" stroke-width="0.8"/><circle cx="3.7" cy="2.2" r="0.55" fill="#1f3690"/><rect x="3.25" y="3.1" width="0.9" height="2.6" fill="#1f3690"/></svg>
<div class="b" style="left:111.20px;top:153.20px;width:242.80px;height:14.80px;background:#fff;border:0.7px solid #e0e2e5;border-radius:2px;box-sizing:border-box;"></div>
<div class="t" style="left:117.60px;top:149.90px;font-size:6.156px;line-height:8.00px;color:#6f7378;font-weight:400;-webkit-text-stroke:0.16px #6f7378;transform:scaleX(0.8666);transform-origin:0 50%;background:#fff;padding:0 1.5px;margin-left:-1.5px;">* Quantité recherchée</div>
<div class="b" style="left:111.40px;top:153.40px;width:241.10px;height:14.00px;overflow:hidden">
<div class="t" style="left:4.80px;top:2.60px;font-size:7.695px;line-height:10.00px;color:#161718;font-weight:400;-webkit-text-stroke:0.16px #161718;transform:scaleX(0.8772);transform-origin:0 50%;">1</div>
</div>
<svg class="b" style="left:340.20px;top:156.30px;" width="8.8" height="8.8" viewBox="0 0 8.8 8.8"><polyline points="1,3.04 4.40,5.76 7.80,3.04" fill="none" stroke="#3c4043" stroke-width="0.75"/></svg>
<div class="b" style="left:111.20px;top:177.50px;width:242.80px;height:16.70px;background:#fff;border:0.7px solid #6b90dc;border-radius:2px;box-sizing:border-box;border-width:0.9px;"></div>
<div class="t" style="left:121.60px;top:174.20px;font-size:6.156px;line-height:8.00px;color:#5b82d8;font-weight:400;-webkit-text-stroke:0.16px #5b82d8;transform:scaleX(0.9210);transform-origin:0 50%;background:#fff;padding:0 1.5px;margin-left:-1.5px;">* Mission</div>
<div class="b" style="left:111.40px;top:177.70px;width:241.10px;height:15.90px;overflow:hidden">
<div class="t" style="left:4.80px;top:3.55px;font-size:7.695px;line-height:10.00px;color:#161718;font-weight:400;-webkit-text-stroke:0.16px #161718;transform:scaleX(0.8997);transform-origin:0 50%;">Business Analyst IA</div>
</div>
<div class="b" style="left:176.20px;top:181.50px;width:0.60px;height:8.50px;background:#202124"></div>
<div class="b" style="left:111.40px;top:194.00px;width:242.10px;height:7.50px;background:#fff;border-radius:0 0 3px 3px;box-shadow:0 1px 1.5px rgba(0,0,0,0.06)"></div>
<div class="b" style="left:111.20px;top:204.30px;width:242.80px;height:15.10px;background:#fff;border:0.7px solid #e0e2e5;border-radius:2px;box-sizing:border-box;"></div>
<svg class="b" style="left:340.20px;top:207.55px;" width="8.8" height="8.8" viewBox="0 0 8.8 8.8"><polyline points="1,3.04 4.40,5.76 7.80,3.04" fill="none" stroke="#3c4043" stroke-width="0.75"/></svg>
<div class="t" style="left:121.10px;top:207.05px;font-size:7.695px;line-height:10.00px;color:#5f6368;font-weight:400;-webkit-text-stroke:0.16px #5f6368;transform:scaleX(0.8733);transform-origin:0 50%;">* Niveau</div>
<div class="b" style="left:111.20px;top:229.10px;width:242.80px;height:15.10px;background:#fff;border:0.7px solid #e0e2e5;border-radius:2px;box-sizing:border-box;"></div>
<svg class="b" style="left:340.20px;top:232.35px;" width="8.8" height="8.8" viewBox="0 0 8.8 8.8"><polyline points="1,3.04 4.40,5.76 7.80,3.04" fill="none" stroke="#3c4043" stroke-width="0.75"/></svg>
<div class="t" style="left:121.10px;top:231.85px;font-size:7.695px;line-height:10.00px;color:#5f6368;font-weight:400;-webkit-text-stroke:0.16px #5f6368;transform:scaleX(0.8790);transform-origin:0 50%;">* Lieu</div>
<div class="b" style="left:111.20px;top:254.30px;width:242.80px;height:15.10px;background:#fff;border:0.7px solid #e0e2e5;border-radius:2px;box-sizing:border-box;"></div>
<div class="t" style="left:121.00px;top:251.00px;font-size:6.156px;line-height:8.00px;color:#6f7378;font-weight:400;-webkit-text-stroke:0.16px #6f7378;transform:scaleX(0.8498);transform-origin:0 50%;background:#fff;padding:0 1.5px;margin-left:-1.5px;">* Fréquence</div>
<div class="b" style="left:111.40px;top:254.50px;width:241.10px;height:14.30px;overflow:hidden">
<div class="t" style="left:4.80px;top:2.75px;font-size:7.695px;line-height:10.00px;color:#161718;font-weight:400;-webkit-text-stroke:0.16px #161718;transform:scaleX(0.8816);transform-origin:0 50%;">100% (5 jrs/semaine)</div>
</div>
<svg class="b" style="left:340.20px;top:257.55px;" width="8.8" height="8.8" viewBox="0 0 8.8 8.8"><polyline points="1,3.04 4.40,5.76 7.80,3.04" fill="none" stroke="#3c4043" stroke-width="0.75"/></svg>
<div class="b" style="left:111.20px;top:279.10px;width:242.80px;height:15.70px;background:#fff;border:0.7px solid #e0e2e5;border-radius:2px;box-sizing:border-box;"></div>
<div class="t" style="left:121.00px;top:275.80px;font-size:6.156px;line-height:8.00px;color:#6f7378;font-weight:400;-webkit-text-stroke:0.16px #6f7378;transform:scaleX(0.8768);transform-origin:0 50%;background:#fff;padding:0 1.5px;margin-left:-1.5px;">* Distanciel</div>
<div class="b" style="left:111.40px;top:279.30px;width:241.10px;height:14.90px;overflow:hidden">
<div class="t" style="left:4.80px;top:3.05px;font-size:7.695px;line-height:10.00px;color:#161718;font-weight:400;-webkit-text-stroke:0.16px #161718;transform:scaleX(0.8630);transform-origin:0 50%;">0% (non applicable)</div>
</div>
<svg class="b" style="left:340.20px;top:282.65px;" width="8.8" height="8.8" viewBox="0 0 8.8 8.8"><polyline points="1,3.04 4.40,5.76 7.80,3.04" fill="none" stroke="#3c4043" stroke-width="0.75"/></svg>
<div class="b" style="left:111.20px;top:304.10px;width:242.80px;height:16.50px;background:#fff;border:0.7px solid #e0e2e5;border-radius:2px;box-sizing:border-box;"></div>
<div class="t" style="left:121.00px;top:300.80px;font-size:6.156px;line-height:8.00px;color:#6f7378;font-weight:400;-webkit-text-stroke:0.16px #6f7378;transform:scaleX(0.8693);transform-origin:0 50%;background:#fff;padding:0 1.5px;margin-left:-1.5px;">* Déplacement</div>
<div class="b" style="left:370.10px;top:82.90px;width:243.90px;height:48.70px;background:#fff;border:0.7px solid #e0e2e5;border-radius:2px;box-sizing:border-box;"></div>
<div class="t" style="left:380.30px;top:85.73px;font-size:7.806px;line-height:10.15px;color:#5f6368;font-weight:400;-webkit-text-stroke:0.16px #5f6368;transform:scaleX(0.8772);transform-origin:0 50%;">* Contexte (min <span style="color:#e0352b;-webkit-text-stroke-color:#e0352b">0/50</span>)</div>
<svg class="b" style="left:609.30px;top:126.60px;" width="4" height="4" viewBox="0 0 4 4"><path d="M0.6 3.6 L3.6 0.6 M2.1 3.6 L3.6 2.1" stroke="#8a8f95" stroke-width="0.5"/></svg>
<div class="b" style="left:370.10px;top:141.00px;width:243.90px;height:48.10px;background:#fff;border:0.7px solid #e0e2e5;border-radius:2px;box-sizing:border-box;"></div>
<div class="t" style="left:381.00px;top:137.70px;font-size:6.156px;line-height:8.00px;color:#6f7378;font-weight:400;-webkit-text-stroke:0.16px #6f7378;transform:scaleX(0.8993);transform-origin:0 50%;background:#fff;padding:0 1.5px;margin-left:-1.5px;">* Description (min <span style="color:#34a853;-webkit-text-stroke-color:#34a853">160/50</span>)</div>
<div class="b" style="left:370.30px;top:141.80px;width:240.00px;height:46.90px;overflow:hidden">
<div class="t" style="left:5.40px;top:2.50px;font-size:7.695px;line-height:10.00px;color:#161718;font-weight:400;-webkit-text-stroke:0.16px #161718;transform:scaleX(0.8772);transform-origin:0 50%;">Analyse des Besoins Métier</div>
<div class="t" style="left:5.40px;top:13.10px;font-size:7.695px;line-height:10.00px;color:#161718;font-weight:400;-webkit-text-stroke:0.16px #161718;transform:scaleX(0.8772);transform-origin:0 50%;">Documentation des Exigences</div>
<div class="t" style="left:5.40px;top:23.70px;font-size:7.695px;line-height:10.00px;color:#161718;font-weight:400;-webkit-text-stroke:0.16px #161718;transform:scaleX(0.8772);transform-origin:0 50%;">Modélisation des Processus</div>
<div class="t" style="left:5.40px;top:34.30px;font-size:7.695px;line-height:10.00px;color:#161718;font-weight:400;-webkit-text-stroke:0.16px #161718;transform:scaleX(0.8772);transform-origin:0 50%;">Analyse des Données</div>
</div>
<div class="b" style="left:609.30px;top:143.00px;width:1.70px;height:26.60px;background:#a9b4d0;border-radius:1px"></div>
<svg class="b" style="left:609.30px;top:184.10px;" width="4" height="4" viewBox="0 0 4 4"><path d="M0.6 3.6 L3.6 0.6 M2.1 3.6 L3.6 2.1" stroke="#8a8f95" stroke-width="0.5"/></svg>
<div class="b" style="left:370.10px;top:199.30px;width:243.90px;height:48.60px;background:#fff;border:0.7px solid #e0e2e5;border-radius:2px;box-sizing:border-box;"></div>
<div class="t" style="left:381.00px;top:196.00px;font-size:6.156px;line-height:8.00px;color:#6f7378;font-weight:400;-webkit-text-stroke:0.16px #6f7378;transform:scaleX(0.8961);transform-origin:0 50%;background:#fff;padding:0 1.5px;margin-left:-1.5px;">* Livrable (min <span style="color:#34a853;-webkit-text-stroke-color:#34a853">171/20</span>)</div>
<div class="b" style="left:370.30px;top:200.10px;width:240.00px;height:47.40px;overflow:hidden">
<div class="t" style="left:5.40px;top:2.50px;font-size:7.695px;line-height:10.00px;color:#161718;font-weight:400;-webkit-text-stroke:0.16px #161718;transform:scaleX(0.8772);transform-origin:0 50%;">Document d'exigences fonctionnelles</div>
<div class="t" style="left:5.40px;top:13.10px;font-size:7.695px;line-height:10.00px;color:#161718;font-weight:400;-webkit-text-stroke:0.16px #161718;transform:scaleX(0.8772);transform-origin:0 50%;">Spécifications des cas d'utilisation</div>
<div class="t" style="left:5.40px;top:23.70px;font-size:7.695px;line-height:10.00px;color:#161718;font-weight:400;-webkit-text-stroke:0.16px #161718;transform:scaleX(0.8772);transform-origin:0 50%;">Modèles de processus métier</div>
<div class="t" style="left:5.40px;top:34.30px;font-size:7.695px;line-height:10.00px;color:#161718;font-weight:400;-webkit-text-stroke:0.16px #161718;transform:scaleX(0.8772);transform-origin:0 50%;">Matrice de traçabilité des exigences</div>
<div class="t" style="left:5.40px;top:44.90px;font-size:7.695px;line-height:10.00px;color:#161718;font-weight:400;-webkit-text-stroke:0.16px #161718;transform:scaleX(0.8772);transform-origin:0 50%;">Document d'analyse des risques</div>
</div>
<div class="b" style="left:609.30px;top:201.00px;width:1.70px;height:27.00px;background:#a9b4d0;border-radius:1px"></div>
<svg class="b" style="left:609.30px;top:242.90px;" width="4" height="4" viewBox="0 0 4 4"><path d="M0.6 3.6 L3.6 0.6 M2.1 3.6 L3.6 2.1" stroke="#8a8f95" stroke-width="0.5"/></svg>
<div class="b" style="left:370.10px;top:257.40px;width:243.90px;height:50.20px;background:#fff;border:0.7px solid #e0e2e5;border-radius:2px;box-sizing:border-box;"></div>
<div class="t" style="left:381.00px;top:254.10px;font-size:6.156px;line-height:8.00px;color:#6f7378;font-weight:400;-webkit-text-stroke:0.16px #6f7378;transform:scaleX(0.8926);transform-origin:0 50%;background:#fff;padding:0 1.5px;margin-left:-1.5px;">* Compétences (min <span style="color:#34a853;-webkit-text-stroke-color:#34a853">1043/20</span>)</div>
<div class="b" style="left:370.30px;top:258.20px;width:240.00px;height:49.00px;overflow:hidden">
<div class="t" style="left:5.40px;top:2.50px;font-size:7.695px;line-height:10.00px;color:#161718;font-weight:400;-webkit-text-stroke:0.16px #161718;transform:scaleX(0.8772);transform-origin:0 50%;">La capacité à recueillir, analyser et documenter de manière approfondie les</div>
<div class="t" style="left:5.40px;top:13.10px;font-size:7.695px;line-height:10.00px;color:#161718;font-weight:400;-webkit-text-stroke:0.16px #161718;transform:scaleX(0.8772);transform-origin:0 50%;">besoins métier, qu'ils soient fonctionnels ou non fonctionnels, en travaillant</div>
<div class="t" style="left:5.40px;top:23.70px;font-size:7.695px;line-height:10.00px;color:#161718;font-weight:400;-webkit-text-stroke:0.16px #161718;transform:scaleX(0.8772);transform-origin:0 50%;">en étroite collaboration avec les parties prenantes</div>
<div class="t" style="left:5.40px;top:34.30px;font-size:7.695px;line-height:10.00px;color:#161718;font-weight:400;-webkit-text-stroke:0.16px #161718;transform:scaleX(0.8772);transform-origin:0 50%;">Une compréhension solide des concepts informatiques et des systèmes</div>
</div>
<div class="b" style="left:609.30px;top:259.50px;width:1.70px;height:9.50px;background:#a9b4d0;border-radius:1px"></div>
<svg class="b" style="left:609.30px;top:302.60px;" width="4" height="4" viewBox="0 0 4 4"><path d="M0.6 3.6 L3.6 0.6 M2.1 3.6 L3.6 2.1" stroke="#8a8f95" stroke-width="0.5"/></svg>
<div class="t" style="left:631.20px;top:87.20px;font-size:7.850px;line-height:10.20px;color:#202124;font-weight:400;-webkit-text-stroke:0.2px #202124;transform:scaleX(0.8772);transform-origin:0 50%;">Informations internes</div>
<div class="b" style="left:631.60px;top:101.40px;width:239.90px;height:48.10px;background:#fff;border:0.7px solid #e0e2e5;border-radius:2px;box-sizing:border-box;"></div>
<div class="t" style="left:642.00px;top:98.10px;font-size:6.156px;line-height:8.00px;color:#6f7378;font-weight:400;-webkit-text-stroke:0.16px #6f7378;transform:scaleX(0.8909);transform-origin:0 50%;background:#fff;padding:0 1.5px;margin-left:-1.5px;">Commentaire interne (max <span style="color:#34a853;-webkit-text-stroke-color:#34a853">0/500</span>)</div>
<div class="t" style="left:636.60px;top:103.70px;font-size:7.695px;line-height:10.00px;color:#202124;font-weight:400;-webkit-text-stroke:0.2px #202124;transform:scaleX(0.8791);transform-origin:0 50%;">Renouvellement/Nouveau :</div>
<div class="t" style="left:636.60px;top:114.15px;font-size:7.695px;line-height:10.00px;color:#202124;font-weight:400;-webkit-text-stroke:0.2px #202124;transform:scaleX(0.8148);transform-origin:0 50%;">OPEX/COPEX :</div>
<div class="t" style="left:636.60px;top:124.60px;font-size:7.695px;line-height:10.00px;color:#202124;font-weight:400;-webkit-text-stroke:0.2px #202124;transform:scaleX(0.8655);transform-origin:0 50%;">Projet :</div>
<svg class="b" style="left:866.80px;top:144.40px;" width="4" height="4" viewBox="0 0 4 4"><path d="M0.6 3.6 L3.6 0.6 M2.1 3.6 L3.6 2.1" stroke="#8a8f95" stroke-width="0.5"/></svg>
<div class="b" style="left:631.00px;top:159.60px;width:240.20px;height:15.60px;background:#fff;border:0.7px solid #e0e2e5;border-radius:2px;box-sizing:border-box;"></div>
<div class="t" style="left:641.00px;top:162.60px;font-size:7.695px;line-height:10.00px;color:#5f6368;font-weight:400;-webkit-text-stroke:0.16px #5f6368;transform:scaleX(0.8859);transform-origin:0 50%;">Projet / Ref</div>
<div class="b" style="left:631.00px;top:185.30px;width:240.20px;height:15.60px;background:#fff;border:0.7px solid #e0e2e5;border-radius:2px;box-sizing:border-box;"></div>
<div class="t" style="left:641.00px;top:188.30px;font-size:7.695px;line-height:10.00px;color:#5f6368;font-weight:400;-webkit-text-stroke:0.16px #5f6368;transform:scaleX(0.8833);transform-origin:0 50%;">Code imputation</div>
<div class="b" style="left:631.00px;top:211.30px;width:240.20px;height:15.30px;background:#fff;border:0.7px solid #e0e2e5;border-radius:2px;box-sizing:border-box;"></div>
<div class="t" style="left:641.00px;top:214.15px;font-size:7.695px;line-height:10.00px;color:#5f6368;font-weight:400;-webkit-text-stroke:0.16px #5f6368;transform:scaleX(0.8664);transform-origin:0 50%;">* Durée estimée JH</div>
<div class="b" style="left:631.00px;top:237.30px;width:240.20px;height:15.90px;background:#fff;border:0.7px solid #e0e2e5;border-radius:2px;box-sizing:border-box;"></div>
<div class="t" style="left:641.00px;top:240.45px;font-size:7.695px;line-height:10.00px;color:#5f6368;font-weight:400;-webkit-text-stroke:0.16px #5f6368;transform:scaleX(0.8559);transform-origin:0 50%;">TJ cible HT</div>
<svg class="b" style="left:860.00px;top:241.50px;" width="5" height="7" viewBox="0 0 5 7"><polyline points="1,2.6 2.4,1.2 3.8,2.6" fill="none" stroke="#5f6368" stroke-width="0.6"/><polyline points="1,4.4 2.4,5.8 3.8,4.4" fill="none" stroke="#5f6368" stroke-width="0.6"/></svg>
<div class="t" style="left:631.20px;top:256.32px;font-size:5.654px;line-height:7.35px;color:#8e9399;font-weight:400;-webkit-text-stroke:0.16px #8e9399;transform:scaleX(0.8772);transform-origin:0 50%;font-style:italic;-webkit-text-stroke:0;">Moyenne TJ grille :</div>
<div class="b" style="left:631.00px;top:273.30px;width:240.20px;height:15.60px;background:#f1f3f4;border:0.7px solid #e3e5e8;border-radius:2px;box-sizing:border-box"></div>
<div class="b" style="left:639.50px;top:268.00px;width:48.00px;height:10.20px;background:#e8eaed;border-radius:5px"></div>
<div class="t" style="left:642.10px;top:269.64px;font-size:6.096px;line-height:7.93px;color:#55595e;font-weight:400;-webkit-text-stroke:0.16px #55595e;transform:scaleX(0.8772);transform-origin:0 50%;-webkit-text-stroke:0.08px #55595e;">Budget estimé HT</div>
<div class="t" style="left:863.90px;top:276.51px;font-size:6.600px;line-height:8.58px;color:#3c4043;font-weight:400;-webkit-text-stroke:0.16px #3c4043;transform:translateX(-50%) scaleX(1.0000);transform-origin:50% 50%;">€</div>
<div class="t" style="left:631.20px;top:299.03px;font-size:7.648px;line-height:9.94px;color:#202124;font-weight:400;-webkit-text-stroke:0.2px #202124;transform:scaleX(0.8772);transform-origin:0 50%;">Processus interne</div>
<div class="t" style="left:845.60px;top:300.68px;font-size:5.418px;line-height:7.04px;color:#6f92dc;font-weight:400;-webkit-text-stroke:0.16px #6f92dc;transform:scaleX(0.8772);transform-origin:0 50%;">Groupes &gt;&gt;</div>
<div class="b" style="left:0.00px;top:0.00px;width:91.40px;height:700.00px;background:#fff"></div>
<div class="b" style="left:91.40px;top:0.00px;width:908.60px;height:25.30px;background:#fff"></div>
<div class="b" style="left:91.20px;top:25.30px;width:0.60px;height:674.70px;background:#eff1f3"></div>
<div class="b" style="left:91.40px;top:25.00px;width:908.60px;height:0.60px;background:#eef0f2"></div>
<div class="b" style="left:32.00px;top:8.00px;width:25.50px;height:25.00px;background:#ff7900"></div>
<div class="b" style="left:32.00px;top:16.50px;width:25.50px;height:7.80px;background:#3fe2c2"></div>
<div class="b" style="left:34.30px;top:17.50px;width:6.00px;height:5.80px;background:#0f1d6b;border-radius:1.4px"></div>
<svg class="b" style="left:34.30px;top:17.50px;" width="6" height="6" viewBox="0 0 6 6"><path d="M2.2 1.6 L4.2 2.9 L2.2 4.2 Z" fill="#3fb6e2"/></svg>
<div class="t" style="left:41.2px;top:17.6px;font-size:5.2px;line-height:6.5px;font-weight:700;color:#49d6c4;-webkit-text-stroke:0.3px #1b4f86;letter-spacing:0.35px;transform:scaleX(0.95);transform-origin:0 0">TEST</div>
<div class="t" style="left:33.40px;top:24.05px;font-size:7.000px;line-height:9.10px;color:#fff;font-weight:400;-webkit-text-stroke:0.2px #fff;letter-spacing:-0.1px;">orange</div>
<div class="t" style="left:54.40px;top:23.98px;font-size:2.500px;line-height:3.25px;color:#fff;font-weight:400;-webkit-text-stroke:0.16px #fff;">™</div>
<div class="b" style="left:105.20px;top:4.20px;width:537.10px;height:16.80px;background:#f1f3f4;border:0.6px solid #e4e7ea;border-radius:3px;box-sizing:border-box"></div>
<svg class="b" style="left:110.50px;top:8.30px;" width="8" height="8" viewBox="0 0 8 8"><circle cx="3.4" cy="3.4" r="2.6" fill="none" stroke="#7a7f85" stroke-width="0.7"/><line x1="5.3" y1="5.3" x2="7.3" y2="7.3" stroke="#7a7f85" stroke-width="0.7"/></svg>
<div class="t" style="left:122.80px;top:8.73px;font-size:6.573px;line-height:8.54px;color:#6b7075;font-weight:400;-webkit-text-stroke:0.16px #6b7075;transform:scaleX(0.8772);transform-origin:0 50%;-webkit-text-stroke:0.1px #6b7075;">Rechercher des informations sur cette page (Date, n° d'AO, n° d'Offre, Mission, Entité, Nom, Projet, Lieu...)</div>
<svg class="b" style="left:651.50px;top:3.50px;" width="13" height="9" viewBox="0 0 13 9"><path d="M5 1 C7.6 1 9 2.2 9 3.9 C9 5.6 7.6 6.8 5 6.8 L3.6 6.8 L1.6 8.2 L2.2 6.4 C1.2 5.9 0.8 5 0.8 3.9 C0.8 2.2 2.4 1 5 1z" fill="#fff" stroke="#0f1d6b" stroke-width="0.55"/><line x1="2.6" y1="3.9" x2="7.2" y2="3.9" stroke="#9aa0a6" stroke-width="0.5"/><path d="M8.4 1.8 h3 a0.9 0.9 0 0 1 0.9 0.9 v3.2 a0.9 0.9 0 0 1 -0.9 0.9 h-1.6 l-1.6 1.2 v-1.2 a0.9 0.9 0 0 1 -0.7 -0.9 v-3.2 a0.9 0.9 0 0 1 0.9 -0.9z" fill="#0f1d6b"/><line x1="9.2" y1="4.0" x2="11.6" y2="4.0" stroke="#fff" stroke-width="0.5"/></svg>
<div class="t" style="left:658.80px;top:14.82px;font-size:5.500px;line-height:7.15px;color:#a8adb2;font-weight:400;-webkit-text-stroke:0.16px #a8adb2;transform:translateX(-50%) scaleX(0.8559);transform-origin:50% 50%;">Canal</div>
<svg class="b" style="left:679.60px;top:4.40px;" width="10" height="10" viewBox="0 0 10 10"><circle cx="4.6" cy="4.6" r="4.0" fill="none" stroke="#0f1d6b" stroke-width="0.75"/><circle cx="4.6" cy="2.6" r="0.6" fill="#0f1d6b"/><rect x="4.1" y="3.8" width="1" height="3.3" fill="#0f1d6b"/></svg>
<div class="t" style="left:684.20px;top:14.82px;font-size:5.500px;line-height:7.15px;color:#a8adb2;font-weight:400;-webkit-text-stroke:0.16px #a8adb2;transform:translateX(-50%) scaleX(0.8772);transform-origin:50% 50%;">Lexique</div>
<svg class="b" style="left:707.40px;top:4.60px;" width="9" height="9" viewBox="0 0 9 9"><circle cx="4.5" cy="4.5" r="4.1" fill="#d6dbe8" stroke="#0f1d6b" stroke-width="0.45"/><circle cx="4.5" cy="4.5" r="1.6" fill="#fff"/><path d="M7.37 5.38 A3.0 3.0 0 0 1 5.38 7.37" fill="none" stroke="#0f1d6b" stroke-width="2.1"/><path d="M3.62 7.37 A3.0 3.0 0 0 1 1.63 5.38" fill="none" stroke="#0f1d6b" stroke-width="2.1"/><path d="M1.63 3.62 A3.0 3.0 0 0 1 3.62 1.63" fill="none" stroke="#0f1d6b" stroke-width="2.1"/><path d="M5.38 1.63 A3.0 3.0 0 0 1 7.37 3.62" fill="none" stroke="#0f1d6b" stroke-width="2.1"/></svg>
<div class="t" style="left:711.80px;top:14.82px;font-size:5.500px;line-height:7.15px;color:#a8adb2;font-weight:400;-webkit-text-stroke:0.16px #a8adb2;transform:translateX(-50%) scaleX(0.9136);transform-origin:50% 50%;">Support</div>
<svg class="b" style="left:731.70px;top:4.80px;" width="9" height="9" viewBox="0 0 9 9"><rect x="0" y="0" width="8.6" height="8.6" rx="1.8" fill="#0f1d6b"/><path d="M2.4 2.3 h3.8 a0.6 0.6 0 0 1 0.6 0.6 v2.3 a0.6 0.6 0 0 1 -0.6 0.6 h-2.4 l-1.6 1.3 v-1.3 a0.6 0.6 0 0 1 -0.4 -0.6 v-2.3 a0.6 0.6 0 0 1 0.6 -0.6z" fill="none" stroke="#3fe2c2" stroke-width="0.6"/></svg>
<div class="t" style="left:736.10px;top:14.82px;font-size:5.500px;line-height:7.15px;color:#a8adb2;font-weight:400;-webkit-text-stroke:0.16px #a8adb2;transform:translateX(-50%) scaleX(0.9019);transform-origin:50% 50%;">Piter</div>
<div class="b" style="left:751.50px;top:5.10px;width:28.30px;height:14.80px;background:#14e2b0;border-radius:2px"></div>
<div class="t" style="left:765.50px;top:9.04px;font-size:6.399px;line-height:8.32px;color:#fff;font-weight:700;transform:translateX(-50%) scaleX(0.8772);transform-origin:50% 50%;">Quitter</div>
<div class="b" style="left:790.30px;top:7.00px;width:0.60px;height:11.00px;background:#eef0f2"></div>
<div class="b" style="left:805.3px;top:5.5px;width:13.4px;height:13.4px;border-radius:50%;overflow:hidden;background:#8a9cc0;"><div style="position:absolute;left:1.6px;top:2.2px;width:10.2px;height:13px;border-radius:48%;background:#9c6f4c"></div><div style="position:absolute;left:4.3px;top:4.6px;width:4.8px;height:6.8px;border-radius:50%;background:#e6b39a"></div><div style="position:absolute;left:3px;top:1.8px;width:7.5px;height:3.6px;border-radius:50%;background:#b58a62"></div></div>
<div class="t" style="left:825.40px;top:8.62px;font-size:6.736px;line-height:8.76px;color:#202124;font-weight:400;-webkit-text-stroke:0.2px #202124;transform:scaleX(0.8772);transform-origin:0 50%;">Virginie</div>
<svg class="b" style="left:848.90px;top:8.80px;" width="7.2" height="7.2" viewBox="0 0 7.2 7.2"><polyline points="1,2.56 3.60,4.64 6.20,2.56" fill="none" stroke="#9aa0a6" stroke-width="0.6"/></svg>
<div class="b" style="left:867.00px;top:9.40px;width:3.40px;height:5.80px;background:#1e2f86"></div>
<div class="b" style="left:873.80px;top:9.40px;width:3.40px;height:5.80px;background:#e8282e"></div>
<div class="b" style="left:85.8px;top:36.8px;width:14.4px;height:14.4px;border-radius:50%;background:#fff;box-shadow:0 0 2px rgba(0,0,0,0.12)"></div>
<svg class="b" style="left:88.80px;top:39.80px;" width="9" height="9" viewBox="0 0 9 9"><circle cx="4.2" cy="4.2" r="3.4" fill="none" stroke="#5f6368" stroke-width="0.7"/><polyline points="4.9,2.6 3.3,4.2 4.9,5.8" fill="none" stroke="#5f6368" stroke-width="0.7"/></svg>
<div class="t" style="left:7.90px;top:183.15px;font-size:5.928px;line-height:7.71px;color:#9aa0a6;font-weight:400;-webkit-text-stroke:0.16px #9aa0a6;transform:scaleX(0.8772);transform-origin:0 50%;">Sous-traitants</div>
<div class="t" style="left:22.80px;top:46.40px;font-size:6.612px;line-height:8.60px;color:#383b40;font-weight:400;-webkit-text-stroke:0.16px #383b40;transform:scaleX(0.8772);transform-origin:0 50%;">Tableau de bord</div>
<svg class="b" style="left:10.60px;top:46.20px;" width="8" height="8" viewBox="0 0 8 8"><path stroke-linecap="round" d="M2.02 6.54 A3.1 3.1 0 0 1 1.73 1.70 M2.84 1.05 A3.1 3.1 0 0 1 4.76 1.05 M5.87 1.70 A3.1 3.1 0 0 1 5.58 6.54" fill="none" stroke="#383b40" stroke-width="1.0"/><circle cx="3.8" cy="3.5" r="0.65" fill="#e8503a"/></svg>
<div class="t" style="left:22.80px;top:64.80px;font-size:6.612px;line-height:8.60px;color:#383b40;font-weight:400;-webkit-text-stroke:0.16px #383b40;transform:scaleX(0.8772);transform-origin:0 50%;">Demandes</div>
<svg class="b" style="left:10.60px;top:64.60px;" width="8" height="8" viewBox="0 0 8 8"><rect x="1.4" y="0.5" width="4.6" height="7" rx="1" fill="none" stroke="#383b40" stroke-width="0.75"/><circle cx="3.3" cy="3.9" r="0.75" fill="#383b40"/></svg>
<div class="b" style="left:67.00px;top:64.60px;width:10.60px;height:8.00px;background:#e8eaed;border-radius:4px"></div>
<div class="t" style="left:72.30px;top:66.11px;font-size:4.900px;line-height:6.37px;color:#3c4043;font-weight:700;transform:translateX(-50%) scaleX(1.0000);transform-origin:50% 50%;">5</div>
<div class="b" style="left:7.90px;top:79.60px;width:73.30px;height:15.00px;background:#e9ecf4;border-radius:2.5px"></div>
<div class="t" style="left:22.80px;top:83.30px;font-size:6.612px;line-height:8.60px;color:#1a2a6c;font-weight:400;-webkit-text-stroke:0.16px #1a2a6c;transform:scaleX(0.8772);transform-origin:0 50%;">Consultations</div>
<svg class="b" style="left:10.60px;top:83.10px;" width="8" height="8" viewBox="0 0 8 8"><path d="M3.9 0.6 L4.9 2.9 L7.3 3.1 L5.5 4.7 L6.0 7.1 L3.9 5.8 L1.8 7.1 L2.3 4.7 L0.5 3.1 L2.9 2.9 Z" fill="none" stroke="#1a2a6c" stroke-width="0.6" stroke-linejoin="round"/></svg>
<div class="b" style="left:64.00px;top:83.10px;width:13.60px;height:8.00px;background:transparent;border-radius:4px"></div>
<div class="t" style="left:70.80px;top:84.61px;font-size:4.900px;line-height:6.37px;color:#3c4043;font-weight:700;transform:translateX(-50%) scaleX(1.0000);transform-origin:50% 50%;">50</div>
<div class="t" style="left:22.80px;top:101.70px;font-size:6.612px;line-height:8.60px;color:#383b40;font-weight:400;-webkit-text-stroke:0.16px #383b40;transform:scaleX(0.8772);transform-origin:0 50%;">Attributions</div>
<svg class="b" style="left:10.60px;top:101.50px;" width="8" height="8" viewBox="0 0 8 8"><path d="M0.6 4.2 L1.9 5.3 L4.6 2.3 M3.0 4.8 L3.9 5.4 L7.0 2.0" fill="none" stroke="#383b40" stroke-width="0.9" stroke-linecap="round"/></svg>
<div class="b" style="left:67.00px;top:101.50px;width:10.60px;height:8.00px;background:#e8eaed;border-radius:4px"></div>
<div class="t" style="left:72.30px;top:103.02px;font-size:4.900px;line-height:6.37px;color:#3c4043;font-weight:700;transform:translateX(-50%) scaleX(1.0000);transform-origin:50% 50%;">4</div>
<div class="t" style="left:22.80px;top:120.20px;font-size:6.612px;line-height:8.60px;color:#383b40;font-weight:400;-webkit-text-stroke:0.16px #383b40;transform:scaleX(0.8772);transform-origin:0 50%;">Prestations</div>
<svg class="b" style="left:10.60px;top:120.00px;" width="8" height="8" viewBox="0 0 8 8"><path d="M1.2 0.6 h3.2 l1.3 1.3 v2.0 M1.2 0.6 v6.6 h2.6" fill="none" stroke="#8a8f95" stroke-width="0.6"/><circle cx="5.6" cy="6.0" r="1.6" fill="#383b40"/></svg>
<div class="b" style="left:64.00px;top:120.00px;width:13.60px;height:8.00px;background:#e8eaed;border-radius:4px"></div>
<div class="t" style="left:70.80px;top:121.52px;font-size:4.900px;line-height:6.37px;color:#3c4043;font-weight:700;transform:translateX(-50%) scaleX(1.0000);transform-origin:50% 50%;">33</div>
<div class="t" style="left:22.80px;top:138.70px;font-size:6.612px;line-height:8.60px;color:#383b40;font-weight:400;-webkit-text-stroke:0.16px #383b40;transform:scaleX(0.8772);transform-origin:0 50%;">Activités</div>
<svg class="b" style="left:10.60px;top:138.50px;" width="8" height="8" viewBox="0 0 8 8"><path d="M6.4 2.0 A3.2 3.2 0 1 1 5.2 1.0" fill="none" stroke="#383b40" stroke-width="0.8"/><path d="M5.0 0.2 L6.6 1.2 L5.4 2.4z" fill="#383b40"/><polyline points="3.4,2.2 3.4,4.2 5.0,4.6" fill="none" stroke="#383b40" stroke-width="0.6"/></svg>
<div class="b" style="left:64.00px;top:138.50px;width:13.60px;height:8.00px;background:#e8eaed;border-radius:4px"></div>
<div class="t" style="left:70.80px;top:140.01px;font-size:4.900px;line-height:6.37px;color:#3c4043;font-weight:700;transform:translateX(-50%) scaleX(1.0000);transform-origin:50% 50%;">33</div>
<div class="t" style="left:22.80px;top:157.20px;font-size:6.612px;line-height:8.60px;color:#383b40;font-weight:400;-webkit-text-stroke:0.16px #383b40;transform:scaleX(0.8772);transform-origin:0 50%;">Pilotage</div>
<svg class="b" style="left:10.60px;top:157.00px;" width="8" height="8" viewBox="0 0 8 8"><path d="M1.2 0.6 h3.4 l1.9 1.9 v5.0 h-5.3 z" fill="#f4f5f6" stroke="#a9adb2" stroke-width="0.6"/><polyline points="2.4,5.4 3.4,4.2 4.2,5.0 5.2,3.8" fill="none" stroke="#a9adb2" stroke-width="0.5"/></svg>
<div class="t" style="left:22.80px;top:195.50px;font-size:6.612px;line-height:8.60px;color:#383b40;font-weight:400;-webkit-text-stroke:0.16px #383b40;transform:scaleX(0.8772);transform-origin:0 50%;">Référencements</div>
<svg class="b" style="left:10.60px;top:195.30px;" width="8" height="8" viewBox="0 0 8 8"><path d="M1.3 1.3 L6.7 6.7 M6.7 1.3 L1.3 6.7" stroke="#383b40" stroke-width="0.85"/><circle cx="1.1" cy="1.1" r="1.0" fill="#383b40"/><circle cx="6.9" cy="1.1" r="1.0" fill="#383b40"/><circle cx="1.1" cy="6.9" r="1.0" fill="#383b40"/><circle cx="6.9" cy="6.9" r="1.0" fill="#383b40"/><circle cx="4" cy="4" r="1.1" fill="#383b40"/></svg>
<div class="b" style="left:67.00px;top:195.30px;width:10.60px;height:8.00px;background:#e8eaed;border-radius:4px"></div>
<div class="t" style="left:72.30px;top:196.81px;font-size:4.900px;line-height:6.37px;color:#3c4043;font-weight:700;transform:translateX(-50%) scaleX(1.0000);transform-origin:50% 50%;">4</div>
<div class="t" style="left:22.80px;top:212.60px;font-size:6.612px;line-height:8.60px;color:#383b40;font-weight:400;-webkit-text-stroke:0.16px #383b40;transform:scaleX(0.8772);transform-origin:0 50%;">Fournisseurs</div>
<svg class="b" style="left:10.60px;top:212.40px;" width="8" height="8" viewBox="0 0 8 8"><path d="M0.6 3.0 h2.2 l2.6 -1.4 v4.6 l-2.6 -1.4 h-2.2z" fill="#e4e6e9" stroke="#9aa0a6" stroke-width="0.45"/><rect x="5.0" y="2.2" width="2.2" height="3.4" rx="0.6" fill="#383b40"/></svg>
<div class="b" style="left:67.00px;top:212.40px;width:10.60px;height:8.00px;background:#e8eaed;border-radius:4px"></div>
<div class="t" style="left:72.30px;top:213.91px;font-size:4.900px;line-height:6.37px;color:#3c4043;font-weight:700;transform:translateX(-50%) scaleX(1.0000);transform-origin:50% 50%;">5</div>
<div class="t" style="left:22.80px;top:229.40px;font-size:6.612px;line-height:8.60px;color:#383b40;font-weight:400;-webkit-text-stroke:0.16px #383b40;transform:scaleX(0.8772);transform-origin:0 50%;">Statistiques</div>
<svg class="b" style="left:10.60px;top:229.20px;" width="8" height="8" viewBox="0 0 8 8"><rect x="0.6" y="4.6" width="1.3" height="3" fill="#383b40"/><rect x="2.6" y="3.8" width="1.3" height="3.8" fill="#383b40"/><rect x="4.6" y="4.4" width="1.3" height="3.2" fill="#383b40"/><rect x="6.5" y="3.2" width="1.3" height="4.4" fill="#383b40"/><polyline points="0.6,3.4 2.8,2.0 4.6,2.8 7.0,0.9" fill="none" stroke="#383b40" stroke-width="0.7"/><circle cx="7.0" cy="0.9" r="0.8" fill="#383b40"/></svg>
<div class="t" style="left:22.80px;top:246.20px;font-size:6.612px;line-height:8.60px;color:#383b40;font-weight:400;-webkit-text-stroke:0.16px #383b40;transform:scaleX(0.8772);transform-origin:0 50%;">Statistiques (POC)</div>
<svg class="b" style="left:10.60px;top:246.00px;" width="8" height="8" viewBox="0 0 8 8"><rect x="0.6" y="4.6" width="1.3" height="3" fill="#383b40"/><rect x="2.6" y="3.8" width="1.3" height="3.8" fill="#383b40"/><rect x="4.6" y="4.4" width="1.3" height="3.2" fill="#383b40"/><rect x="6.5" y="3.2" width="1.3" height="4.4" fill="#383b40"/><polyline points="0.6,3.4 2.8,2.0 4.6,2.8 7.0,0.9" fill="none" stroke="#383b40" stroke-width="0.7"/><circle cx="7.0" cy="0.9" r="0.8" fill="#383b40"/></svg>
<div class="t" style="left:22.80px;top:264.50px;font-size:6.612px;line-height:8.60px;color:#383b40;font-weight:400;-webkit-text-stroke:0.16px #383b40;transform:scaleX(0.8772);transform-origin:0 50%;">Docuthèque</div>
<svg class="b" style="left:10.60px;top:264.30px;" width="8" height="8" viewBox="0 0 8 8"><path d="M1.0 7.4 L2.6 1.0 M4.0 7.4 V2.2 M6.2 7.4 V2.2" stroke="#383b40" stroke-width="1.1"/><rect x="3.4" y="0.6" width="1.2" height="0.9" fill="#383b40"/><rect x="5.6" y="0.6" width="1.2" height="0.9" fill="#383b40"/></svg>
<div class="t" style="left:22.80px;top:283.00px;font-size:6.612px;line-height:8.60px;color:#383b40;font-weight:400;-webkit-text-stroke:0.16px #383b40;transform:scaleX(0.8772);transform-origin:0 50%;">Cartographie</div>
<svg class="b" style="left:10.60px;top:282.80px;" width="8" height="8" viewBox="0 0 8 8"><circle cx="4" cy="4" r="3.3" fill="none" stroke="#383b40" stroke-width="0.75"/><path d="M2.0 2.0 L3.6 3.2 L2.6 5.6 M4.8 1.0 L4.4 3.2 L6.6 4.4 M3.4 5.0 L4.6 7.0" fill="none" stroke="#383b40" stroke-width="0.8"/></svg>
</div></div>
<svg class="b" style="left:0;top:0" width="1000" height="569" viewBox="0 0 1000 569">
<line x1="645.3" y1="101.4" x2="681.71" y2="161.72" stroke="#e5261b" stroke-width="1.9" stroke-linecap="round"/>
<polygon points="686.1,169.0 676.56,162.49 684.78,157.53" fill="#e5261b"/>
<line x1="180.3" y1="369.2" x2="216.89" y2="429.53" stroke="#e5261b" stroke-width="1.9" stroke-linecap="round"/>
<polygon points="221.3,436.8 211.75,430.31 219.96,425.33" fill="#e5261b"/>
</svg>
</body></html>
